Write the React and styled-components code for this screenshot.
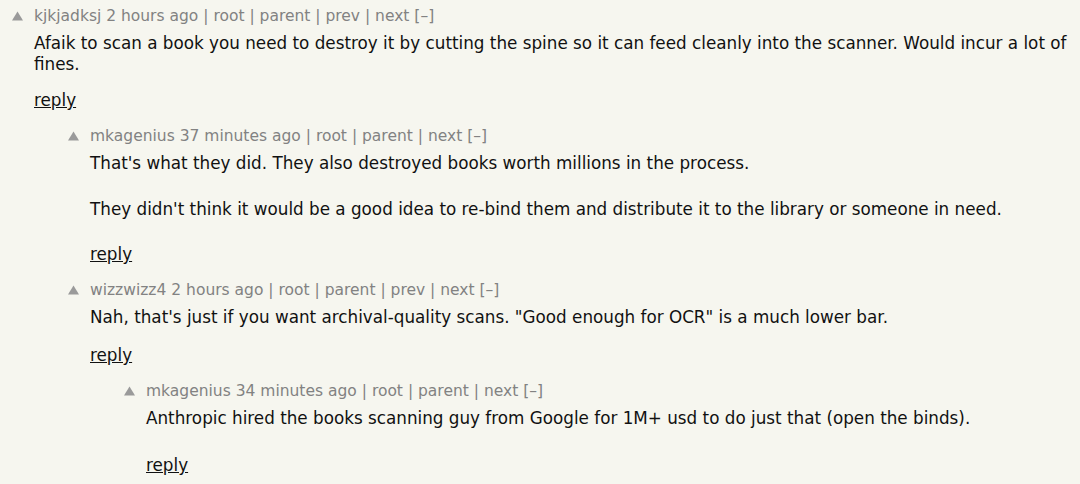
import styled, { createGlobalStyle } from "styled-components";

const GlobalStyle = createGlobalStyle`
  html, body {
    margin: 0;
    padding: 0;
    background: #f6f6ef;
  }
  body {
    font-family: "DejaVu Sans", Verdana, sans-serif;
  }
`;

const Thread = styled.div`
  background: #f6f6ef;
  min-height: 484px;
  padding: 7px 0 0 12px;
  box-sizing: border-box;
`;

const Row = styled.div`
  display: flex;
  align-items: flex-start;
  padding-left: ${(p) => p.level * 56}px;
  margin-bottom: 16px;
`;

const Vote = styled.div`
  width: 22px;
  flex: none;
  padding-top: 4px;
  svg {
    display: block;
  }
`;

const Content = styled.div`
  flex: 1;
  min-width: 0;
  padding-right: 6px;
`;

const Meta = styled.div`
  font-size: 15.5px;
  line-height: 18px;
  color: #828282;
  white-space: nowrap;
`;

const Body = styled.div`
  margin-top: 8px;
  font-size: 16.8px;
  line-height: 21px;
  color: #111;
  p {
    margin: 0;
  }
  p + p {
    margin-top: 25px;
  }
`;

const Reply = styled.a`
  display: inline-block;
  margin-top: ${(p) => p.gap - 21}px;
  font-size: 16.8px;
  line-height: 21px;
  color: #111;
  text-decoration: underline;
`;

const comments = [
  {
    id: 1,
    level: 0,
    user: "kjkjadksj",
    age: "2 hours ago",
    links: ["root", "parent", "prev", "next"],
    replyGap: 36,
    text: [
      "Afaik to scan a book you need to destroy it by cutting the spine so it can feed cleanly into the scanner. Would incur a lot of fines.",
    ],
  },
  {
    id: 2,
    level: 1,
    user: "mkagenius",
    age: "37 minutes ago",
    links: ["root", "parent", "next"],
    replyGap: 45,
    text: [
      "That's what they did. They also destroyed books worth millions in the process.",
      "They didn't think it would be a good idea to re-bind them and distribute it to the library or someone in need.",
    ],
  },
  {
    id: 3,
    level: 1,
    user: "wizzwizz4",
    age: "2 hours ago",
    links: ["root", "parent", "prev", "next"],
    replyGap: 38,
    text: [
      'Nah, that\'s just if you want archival-quality scans. "Good enough for OCR" is a much lower bar.',
    ],
  },
  {
    id: 4,
    level: 2,
    user: "mkagenius",
    age: "34 minutes ago",
    links: ["root", "parent", "next"],
    replyGap: 47,
    text: [
      "Anthropic hired the books scanning guy from Google for 1M+ usd to do just that (open the binds).",
    ],
  },
];

function Arrow() {
  return (
    <svg width="11" height="10" viewBox="0 0 11 10">
      <polygon points="5.5,0.5 11,9.5 0,9.5" fill="#9a9a9a" />
    </svg>
  );
}

function Comment({ c }) {
  return (
    <Row level={c.level}>
      <Vote>
        <Arrow />
      </Vote>
      <Content>
        <Meta>
          {c.user} {c.age} | {c.links.join(" | ")} [–]
        </Meta>
        <Body>
          {c.text.map((t, i) => (
            <p key={i}>{t}</p>
          ))}
        </Body>
        <Reply href="#" gap={c.replyGap}>
          reply
        </Reply>
      </Content>
    </Row>
  );
}

export default function App() {
  return (
    <>
      <GlobalStyle />
      <Thread>
        {comments.map((c) => (
          <Comment key={c.id} c={c} />
        ))}
      </Thread>
    </>
  );
}
